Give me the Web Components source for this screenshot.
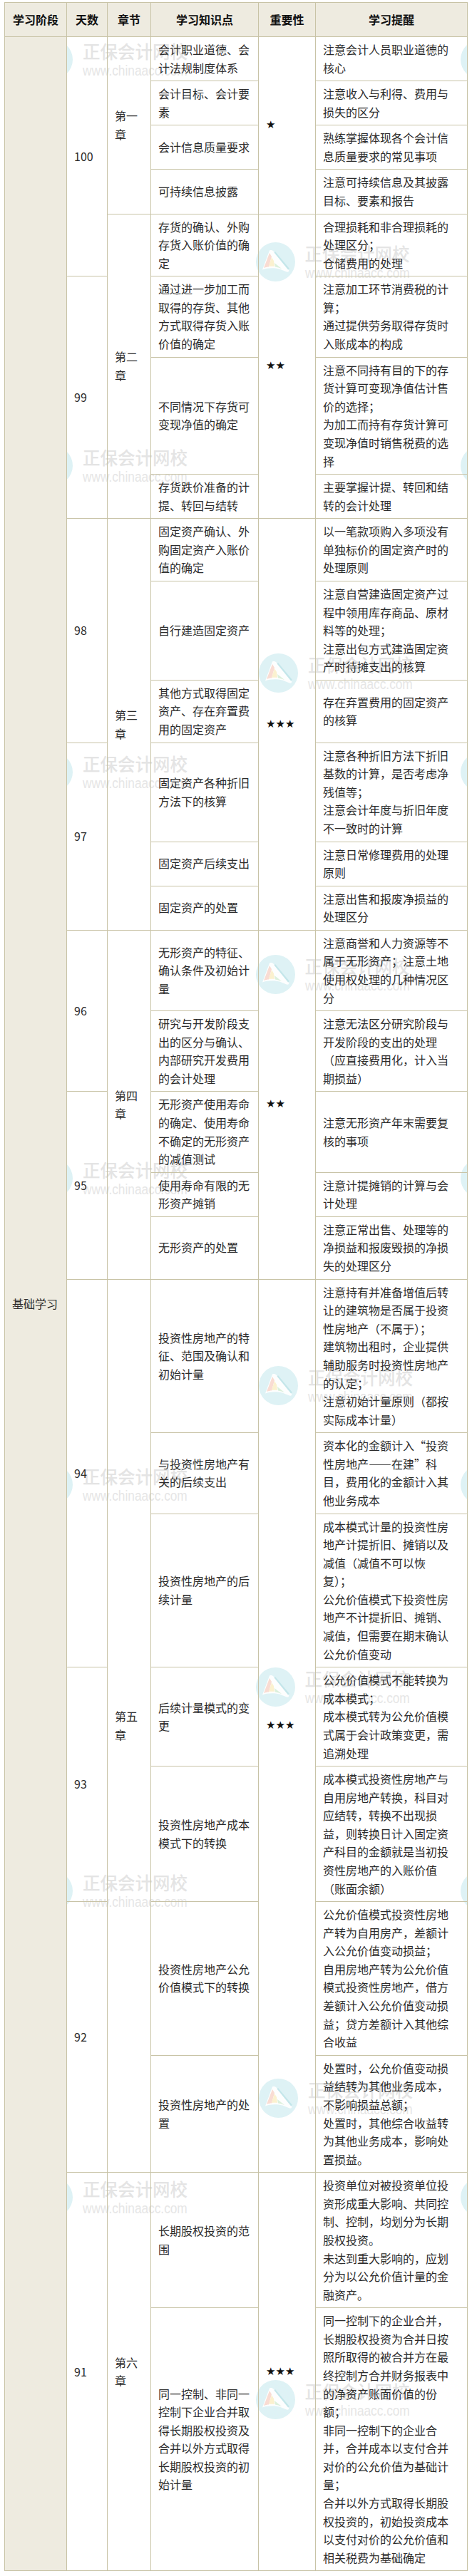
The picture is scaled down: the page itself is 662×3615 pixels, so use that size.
<!DOCTYPE html>
<html lang="zh-CN">
<head>
<meta charset="utf-8">
<title>学习计划</title>
<style>
  html, body { background: #fff; }
  body { margin: 3px 6px 0; font-family: "Noto Sans CJK SC", "Liberation Sans", sans-serif; color: #2b2b2b; }
</style>
</head>
<body>
<plan-table>
<plan-cell kind="head">学习阶段</plan-cell><plan-cell kind="head">天数</plan-cell><plan-cell kind="head">章节</plan-cell><plan-cell kind="head">学习知识点</plan-cell><plan-cell kind="head">重要性</plan-cell><plan-cell kind="head">学习提醒</plan-cell>

<plan-cell kind="stage" span="28">基础学习</plan-cell>
<plan-cell span="5">100</plan-cell><plan-cell kind="chapter" span="4">第一章</plan-cell><plan-cell kind="point">会计职业道德、会计法规制度体系</plan-cell><star-cell span="4">★</star-cell><plan-cell kind="note">注意会计人员职业道德的核心</plan-cell>
<plan-cell kind="point">会计目标、会计要素</plan-cell><plan-cell kind="note">注意收入与利得、费用与损失的区分</plan-cell>
<plan-cell kind="point">会计信息质量要求</plan-cell><plan-cell kind="note">熟练掌握体现各个会计信息质量要求的常见事项</plan-cell>
<plan-cell kind="point">可持续信息披露</plan-cell><plan-cell kind="note">注意可持续信息及其披露目标、要素和报告</plan-cell>
<plan-cell kind="chapter" span="4">第二章</plan-cell><plan-cell kind="point">存货的确认、外购存货入账价值的确定</plan-cell><star-cell span="4">★★</star-cell><plan-cell kind="note">合理损耗和非合理损耗的处理区分；<br>仓储费用的处理</plan-cell>
<plan-cell span="3">99</plan-cell><plan-cell kind="point">通过进一步加工而取得的存货、其他方式取得存货入账价值的确定</plan-cell><plan-cell kind="note">注意加工环节消费税的计算；<br>通过提供劳务取得存货时入账成本的构成</plan-cell>
<plan-cell kind="point">不同情况下存货可变现净值的确定</plan-cell><plan-cell kind="note">注意不同持有目的下的存货计算可变现净值估计售价的选择；<br>为加工而持有存货计算可变现净值时销售税费的选择</plan-cell>
<plan-cell kind="point">存货跌价准备的计提、转回与结转</plan-cell><plan-cell kind="note">主要掌握计提、转回和结转的会计处理</plan-cell>

<plan-cell span="3">98</plan-cell><plan-cell kind="chapter" span="6">第三章</plan-cell><plan-cell kind="point">固定资产确认、外购固定资产入账价值的确定</plan-cell><star-cell span="6">★★★</star-cell><plan-cell kind="note">以一笔款项购入多项没有单独标价的固定资产时的处理原则</plan-cell>
<plan-cell kind="point">自行建造固定资产</plan-cell><plan-cell kind="note">注意自营建造固定资产过程中领用库存商品、原材料等的处理；<br>注意出包方式建造固定资产时待摊支出的核算</plan-cell>
<plan-cell kind="point">其他方式取得固定资产、存在弃置费用的固定资产</plan-cell><plan-cell kind="note">存在弃置费用的固定资产的核算</plan-cell>
<plan-cell span="3">97</plan-cell><plan-cell kind="point">固定资产各种折旧方法下的核算</plan-cell><plan-cell kind="note">注意各种折旧方法下折旧基数的计算，是否考虑净残值等；<br>注意会计年度与折旧年度不一致时的计算</plan-cell>
<plan-cell kind="point">固定资产后续支出</plan-cell><plan-cell kind="note">注意日常修理费用的处理原则</plan-cell>
<plan-cell kind="point">固定资产的处置</plan-cell><plan-cell kind="note">注意出售和报废净损益的处理区分</plan-cell>

<plan-cell span="2">96</plan-cell><plan-cell kind="chapter" span="5">第四章</plan-cell><plan-cell kind="point">无形资产的特征、确认条件及初始计量</plan-cell><star-cell span="5">★★</star-cell><plan-cell kind="note">注意商誉和人力资源等不属于无形资产；注意土地使用权处理的几种情况区分</plan-cell>
<plan-cell kind="point">研究与开发阶段支出的区分与确认、内部研究开发费用的会计处理</plan-cell><plan-cell kind="note">注意无法区分研究阶段与开发阶段的支出的处理（应直接费用化，计入当期损益）</plan-cell>
<plan-cell span="3">95</plan-cell><plan-cell kind="point">无形资产使用寿命的确定、使用寿命不确定的无形资产的减值测试</plan-cell><plan-cell kind="note">注意无形资产年末需要复核的事项</plan-cell>
<plan-cell kind="point">使用寿命有限的无形资产摊销</plan-cell><plan-cell kind="note">注意计提摊销的计算与会计处理</plan-cell>
<plan-cell kind="point">无形资产的处置</plan-cell><plan-cell kind="note">注意正常出售、处理等的净损益和报废毁损的净损失的处理区分</plan-cell>

<plan-cell span="3">94</plan-cell><plan-cell kind="chapter" span="7">第五章</plan-cell><plan-cell kind="point">投资性房地产的特征、范围及确认和初始计量</plan-cell><star-cell span="7">★★★</star-cell><plan-cell kind="note">注意持有并准备增值后转让的建筑物是否属于投资性房地产（不属于）；<br>建筑物出租时，企业提供辅助服务时投资性房地产的认定；<br>注意初始计量原则（都按实际成本计量）</plan-cell>
<plan-cell kind="point">与投资性房地产有关的后续支出</plan-cell><plan-cell kind="note">资本化的金额计入“投资性房地产——在建”科目，费用化的金额计入其他业务成本</plan-cell>
<plan-cell kind="point">投资性房地产的后续计量</plan-cell><plan-cell kind="note">成本模式计量的投资性房地产计提折旧、摊销以及减值（减值不可以恢复）；<br>公允价值模式下投资性房地产不计提折旧、摊销、减值，但需要在期末确认公允价值变动</plan-cell>
<plan-cell span="2">93</plan-cell><plan-cell kind="point">后续计量模式的变更</plan-cell><plan-cell kind="note">公允价值模式不能转换为成本模式；<br>成本模式转为公允价值模式属于会计政策变更，需追溯处理</plan-cell>
<plan-cell kind="point">投资性房地产成本模式下的转换</plan-cell><plan-cell kind="note">成本模式投资性房地产与自用房地产转换，科目对应结转，转换不出现损益，则转换日计入固定资产科目的金额就是当初投资性房地产的入账价值（账面余额）</plan-cell>
<plan-cell span="2">92</plan-cell><plan-cell kind="point">投资性房地产公允价值模式下的转换</plan-cell><plan-cell kind="note">公允价值模式投资性房地产转为自用房产，差额计入公允价值变动损益；<br>自用房地产转为公允价值模式投资性房地产，借方差额计入公允价值变动损益；贷方差额计入其他综合收益</plan-cell>
<plan-cell kind="point">投资性房地产的处置</plan-cell><plan-cell kind="note">处置时，公允价值变动损益结转为其他业务成本，<br>不影响损益总额；<br>处置时，其他综合收益转为其他业务成本，影响处置损益。</plan-cell>

<plan-cell span="2">91</plan-cell><plan-cell kind="chapter" span="2">第六章</plan-cell><plan-cell kind="point">长期股权投资的范围</plan-cell><star-cell span="2">★★★</star-cell><plan-cell kind="note">投资单位对被投资单位投资形成重大影响、共同控制、控制，均划分为长期股权投资。<br>未达到重大影响的，应划分为以公允价值计量的金融资产。</plan-cell>
<plan-cell kind="point">同一控制、非同一控制下企业合并取得长期股权投资及合并以外方式取得长期股权投资的初始计量</plan-cell><plan-cell kind="note">同一控制下的企业合并，长期股权投资为合并日按照所取得的被合并方在最终控制方合并财务报表中的净资产账面价值的份额；<br>非同一控制下的企业合并，合并成本以支付合并对价的公允价值为基础计量；<br>合并以外方式取得长期股权投资的，初始投资成本以支付对价的公允价值和相关税费为基础确定</plan-cell>
</plan-table>

<template id="mark-tpl">
  <style>
    :host { position: absolute; display: flex; align-items: flex-start; gap: 14px; width: 216px; height: 55px; z-index: 0; pointer-events: none; }
    svg { width: 55px; height: 55px; flex: none; display: block; }
    .words { display: flex; flex-direction: column; padding-top: 1.5px; white-space: nowrap; }
    :host([bare]) .words { display: none; }
    .name { font: 500 24.5px/30px "Noto Sans CJK SC", sans-serif; color: #e4e4e4; }
    .url { font: 19.5px/24px "Liberation Sans", sans-serif; color: #e6e6e6; transform: scaleX(.885); transform-origin: 0 50%; }
  </style>
  <svg viewBox="0 0 55 55" aria-hidden="true">
    <circle cx="27.5" cy="27.5" r="27.5" fill="#def2f5"/>
    <path d="M19 11.5 C21 10.5 23 11 25 13 L46 39 C47 41 45 42 43 41.5 L33 37.5 C25 35.5 15 36 9 38.5 Z" fill="#fdfefe"/>
    <path d="M19 15 L11 36 C14 35 16 34.5 18 34.5 L22 20 Z" fill="#f9dcd3"/>
    <path d="M22 21 L18 34 C21 33.5 24 33.5 26 34 L25 26 Z" fill="#fbf1cf"/>
    <path d="M26 29 L27 34.5 C30 35 33 36 36 37 Z" fill="#dcf0dc"/>
    <path d="M27 13 L47 37 L45 38.5 L25.5 14.5 Z" fill="#c4e6ea"/>
  </svg>
  <div class="words"><span class="name">正保会计网校</span><span class="url">www.chinaacc.com</span></div>
</template>

<template id="cell-tpl">
  <style>
    :host {
      position: relative; z-index: 1; display: flex; align-items: center; box-sizing: border-box; min-width: 0;
      padding: 5px 10px; border: solid var(--rule, #c8c3a6); border-width: 0 1px 1px 0;
      font-size: 16px; line-height: 25.58px;
    }
    :host([kind="head"]) { justify-content: center; padding: 10.7px 0; background: var(--tint, #eeebe0); font-weight: 700; color: #111; }
    :host([kind="stage"]) { background: var(--tint, #eeebe0); }
    :host([kind="note"]) { padding-right: 20px; }
    .body { display: block; min-width: 0; }
  </style>
  <span class="body"><slot></slot></span>
</template>

<template id="star-tpl">
  <style>
    :host {
      position: relative; z-index: 1; display: flex; align-items: center; box-sizing: border-box;
      padding: 5px 10px; border: solid var(--rule, #c8c3a6); border-width: 0 1px 1px 0;
      font: 15px/25.58px "DejaVu Sans", sans-serif; color: #111; white-space: nowrap;
    }
  </style>
  <slot></slot>
</template>

<template id="table-tpl">
  <style>
    :host {
      display: block; width: 650px;
      --rule: #c8c3a6; --tint: #eeebe0;
    }
    .grid {
      position: relative; overflow: hidden; box-sizing: border-box; width: 650px;
      display: grid; grid-template-columns: 87px 57px 61px 151px 80px 213px;
      border: solid var(--rule); border-width: 1px 0 0 1px; background: #fff;
    }
  </style>
  <div class="grid"><slot></slot></div>
</template>

<script>
function mount(host, id) {
  host.attachShadow({ mode: "open" }).appendChild(document.getElementById(id).content.cloneNode(true));
}
function spanRows(el) {
  var n = el.getAttribute("span");
  if (n) el.style.gridRowEnd = "span " + n;
}
class WaterMark extends HTMLElement {
  constructor() { super(); mount(this, "mark-tpl"); }
  connectedCallback() {
    this.style.left = (this.getAttribute("x") - 7) + "px";
    this.style.top = (this.getAttribute("y") - 27.5 - 4) + "px";
  }
}
class PlanCell extends HTMLElement {
  constructor() { super(); mount(this, "cell-tpl"); }
  connectedCallback() { spanRows(this); }
}
class StarCell extends HTMLElement {
  constructor() { super(); mount(this, "star-tpl"); }
  connectedCallback() { spanRows(this); }
}
class PlanTable extends HTMLElement {
  constructor() {
    super();
    mount(this, "table-tpl");
    var grid = this.shadowRoot.querySelector(".grid");
    var marks = [];
    [83, 653, 1083, 1653, 2083, 2653, 3083].forEach(function (y) { marks.push([47, y], [646, y, 1]); });
    [[358.5, 367], [363, 944], [358.5, 1367], [363, 1944], [358.5, 2367], [363, 2944], [358.5, 3367]].forEach(function (m) { marks.push(m); });
    marks.forEach(function (m) {
      var w = document.createElement("water-mark");
      w.setAttribute("x", m[0]);
      w.setAttribute("y", m[1]);
      if (m[2]) w.setAttribute("bare", "");
      grid.appendChild(w);
    });
  }
}
customElements.define("water-mark", WaterMark);
customElements.define("plan-cell", PlanCell);
customElements.define("star-cell", StarCell);
customElements.define("plan-table", PlanTable);
</script>
</body>
</html>
